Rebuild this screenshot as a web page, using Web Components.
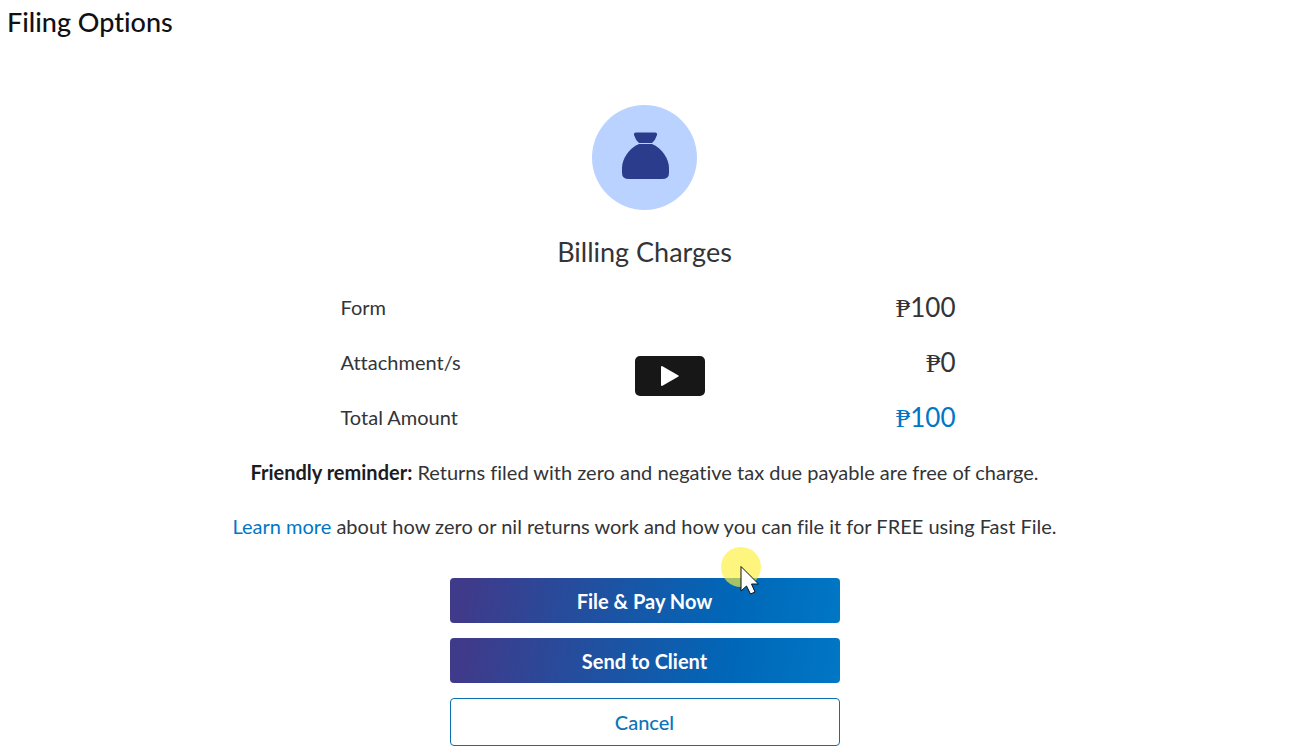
<!DOCTYPE html>
<html lang="en">
<head>
<meta charset="utf-8">
<meta name="viewport" content="width=device-width, initial-scale=1">
<title>Filing Options</title>
<style>
  body {
    margin: 0;
    background: #fff;
    color: #333437;
    font: 20px/28px Lato, "Open Sans", sans-serif;
    font-variant-ligatures: none;
  }
</style>
</head>
<body>
<filing-page>
  <span slot="title">Filing Options</span>
  <money-badge></money-badge>
  <billing-charges>
    <span slot="title">Billing Charges</span>
    <charge-row amount="100">Form</charge-row>
    <charge-row amount="0">Attachment/s</charge-row>
    <charge-row amount="100" total>Total Amount</charge-row>
  </billing-charges>
  <filing-notes></filing-notes>
  <action-list>
    <action-button>File &amp; Pay Now<pointer-mark slot="mark"></pointer-mark></action-button>
    <action-button>Send to Client</action-button>
    <action-button kind="outline">Cancel</action-button>
  </action-list>
</filing-page>
<play-control></play-control>

<script>
const define = (name, markup, setup) => {
  const template = document.createElement("template");
  template.innerHTML = markup;
  customElements.define(name, class extends HTMLElement {
    constructor() {
      super();
      this.attachShadow({ mode: "open" }).append(template.content.cloneNode(true));
    }
    connectedCallback() {
      if (setup) setup(this, this.shadowRoot);
    }
  });
};

define("filing-page", `
  <style>
    :host { display: block; padding: 6px 5px 8px 0; }
    h1 { margin: 0 0 67px 7px; color: #111114; font-size: 27px; line-height: 32px; font-weight: 500; }
    main { display: flex; flex-direction: column; align-items: center; }
  </style>
  <h1><slot name="title"></slot></h1>
  <main><slot></slot></main>`);

define("money-badge", `
  <style>
    :host { display: grid; place-items: center; width: 105px; height: 105px; border-radius: 50%; background: #b9d2ff; }
    svg { display: block; }
  </style>
  <svg width="48" height="52" viewBox="0 0 48 52" fill="#2c3c8c" aria-hidden="true">
    <path d="M15 0.500H34Q36.500 0.500 36 3Q34.500 8 31 11H18Q14.500 8 13 3Q12.500 0.500 15 0.500Z"/>
    <path d="M18 12H31C41 16 48 27 48 36V41Q48 47 41 47H8Q1 47 1 41V36C1 27 8 16 18 12Z"/>
  </svg>`);

define("billing-charges", `
  <style>
    :host { display: flex; flex-direction: column; gap: 23px; width: 622px; max-width: 90%; margin-top: 26px; }
    h2 { margin: 0; text-align: center; font-size: 27px; line-height: 32px; font-weight: 400; }
  </style>
  <h2><slot name="title"></slot></h2>
  <slot></slot>`);

define("charge-row", `
  <style>
    :host { display: flex; justify-content: space-between; align-items: center; padding-left: 7px; line-height: 32px; }
    .amount { display: flex; align-items: baseline; height: 32px; font-size: 26px; }
    .peso { font-family: "Liberation Serif", serif; }
    :host([total]) .amount { color: #0077c5; }
  </style>
  <span><slot></slot></span>
  <span class="amount"><span class="peso">₱</span><span class="value"></span></span>`,
  (host, root) => { root.querySelector(".value").textContent = host.getAttribute("amount"); });

define("filing-notes", `
  <style>
    :host { display: block; margin-top: 25px; text-align: center; }
    p { margin: 0 0 26px; }
    strong { color: #1c1c1f; }
    a { color: #0077c5; text-decoration: none; }
  </style>
  <p><strong>Friendly reminder:</strong> Returns filed with zero and negative tax due payable are free of charge.</p>
  <p><a href="#learn-more">Learn more</a> about how zero or nil returns work and how you can file it for FREE using Fast File.</p>`);

define("action-list", `
  <style>
    :host { display: flex; flex-direction: column; gap: 15px; width: 390px; max-width: 90%; margin-top: 12px; }
  </style>
  <slot></slot>`);

define("action-button", `
  <style>
    :host { display: block; position: relative; }
    button {
      display: block; width: 100%; height: 45px; padding: 0; border: 0; border-radius: 4px;
      background: linear-gradient(100deg, #403a8a 4%, #0067b8 72%, #0077c5);
      color: #fff; font: inherit; font-weight: 700; cursor: pointer;
    }
    :host([kind="outline"]) button { height: 48px; border: 1px solid #0b70b0; background: #fff; color: #0b74b8; font-weight: 500; }
  </style>
  <button type="button"><slot></slot></button>
  <slot name="mark"></slot>`);

define("pointer-mark", `
  <style>
    :host { position: absolute; left: 271px; top: -32px; pointer-events: none; }
    svg { display: block; }
  </style>
  <svg width="42" height="50" viewBox="0 0 42 50" aria-hidden="true">
    <circle cx="20" cy="21" r="20" fill="#fdf03c" fill-opacity="0.66"/>
    <path d="M20 20.500V45L25.500 40L29.500 48L34 46L30.500 38H37.500Z" fill="#fff" stroke="#111" stroke-width="1"/>
  </svg>`);

define("play-control", `
  <style>
    :host { position: absolute; left: calc(50% - 12px); top: 356px; }
    button { display: grid; place-items: center; width: 70px; height: 40px; padding: 0; border: 0; border-radius: 5px; background: #171717; cursor: pointer; }
  </style>
  <button type="button" aria-label="Play">
    <svg width="18" height="20" viewBox="0 0 18 20" fill="#fff" aria-hidden="true"><path d="M0 1Q0 0 1 0L17.500 9.500Q18 10 17.500 10.500L1 20Q0 20 0 19Z"/></svg>
  </button>`);
</script>
</body>
</html>
